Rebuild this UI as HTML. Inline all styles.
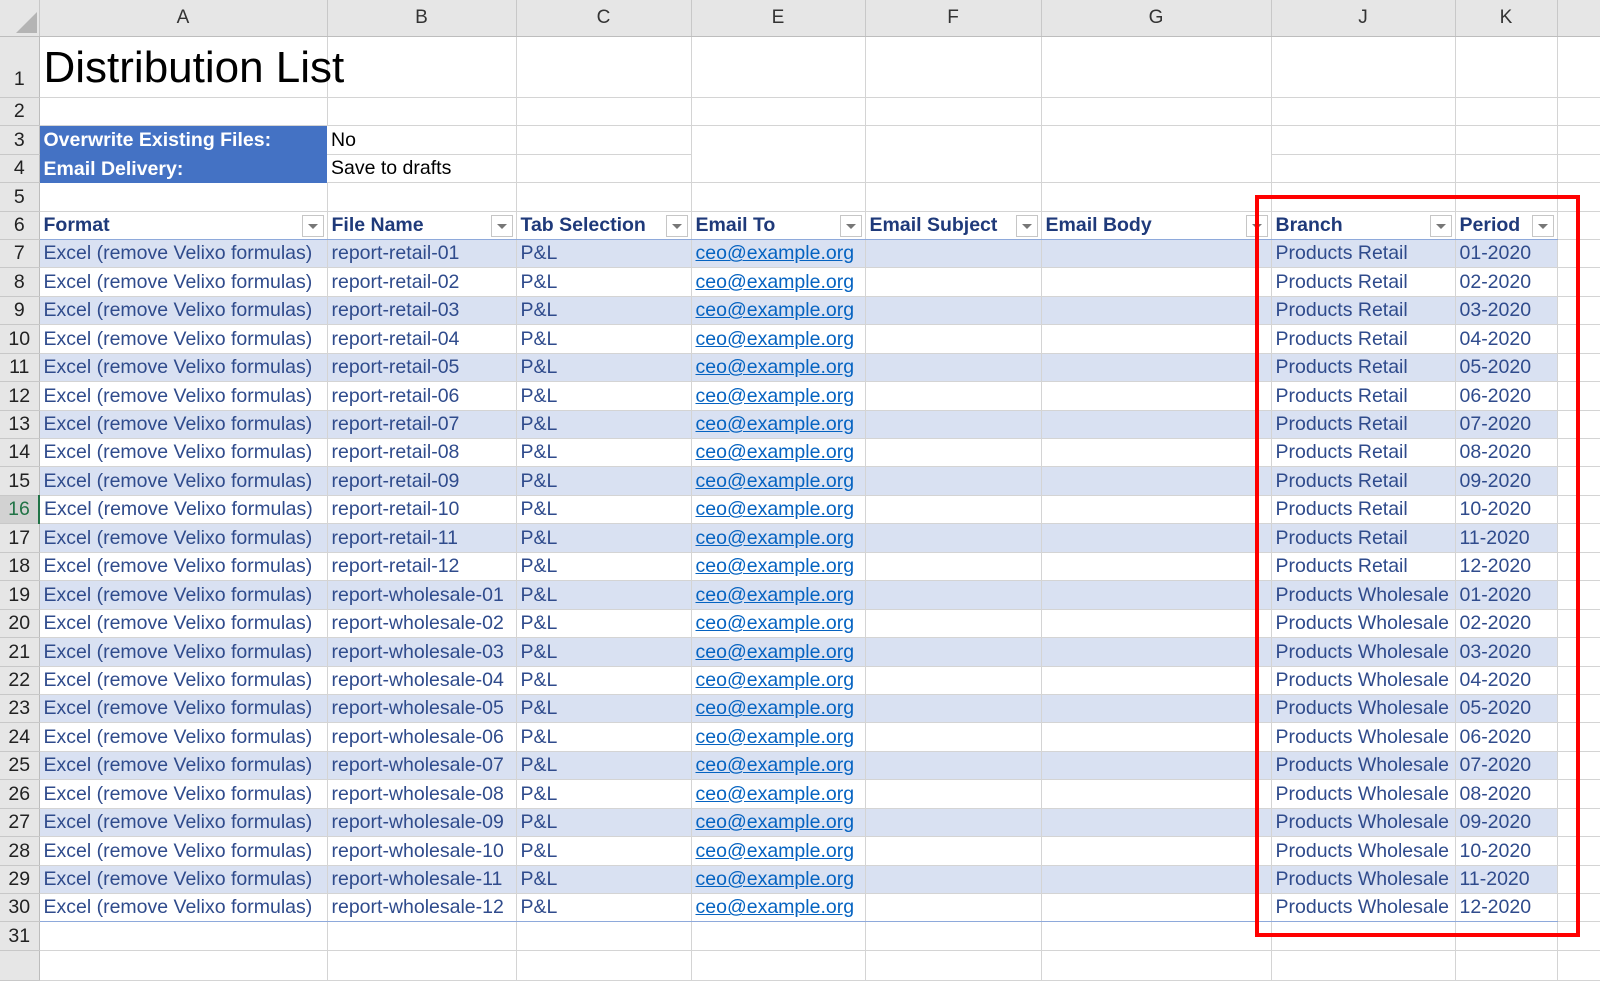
<!DOCTYPE html>
<html><head><meta charset="utf-8">
<style>
*{margin:0;padding:0;box-sizing:border-box}
body{width:1600px;height:951px;overflow:hidden;background:#fff;font-family:"Liberation Sans",sans-serif;position:relative}
table{border-collapse:collapse;table-layout:fixed;position:absolute;left:0;top:0;width:1600px}
tr{height:28.44px}
td{border-right:1px solid #d4d4d4;border-bottom:1px solid #d4d4d4;font-size:19.5px;color:#2f4b8c;padding:0 0 0 4px;white-space:nowrap;overflow:hidden;vertical-align:bottom;padding-bottom:2px;position:relative}
tr.h td{background:#e6e6e6;color:#333;text-align:center;vertical-align:middle;padding:0;border-right:1px solid #c8c8c8;border-bottom:1px solid #bdbdbd;font-size:19px}
td.n{background:#e6e6e6;color:#222;text-align:center;padding:0 0 2px 0;border-right:1px solid #bdbdbd;border-bottom:1px solid #c8c8c8;font-size:19.5px}
td.n16{background:#d2d2d2;color:#217346;border-right:2px solid #217346}
tr.b td:not(.n){background:#d9e1f2}
.bl{background:#4472c4!important;color:#fff!important;font-weight:bold;border-right:none!important;border-bottom:none!important}
.k{color:#000}
.hd td:not(.n){font-weight:bold;color:#1f3a7a;border-top:1px solid #8ea9db;border-bottom:1px solid #8ea9db}
.f{position:absolute;right:3px;top:3px;width:22px;height:22px;border:1px solid #c6c6c6;background:#fff}
.f:after{content:"";position:absolute;left:5px;top:8px;border-left:5px solid transparent;border-right:5px solid transparent;border-top:5px solid #777}
a{color:#0563c1;text-decoration:underline}
.red{position:absolute;left:1255px;top:195px;width:325px;height:742px;border:4px solid #f00}
.tri{position:absolute;left:16px;top:12px;width:0;height:0;border-left:21px solid transparent;border-bottom:21px solid #b4b4b4}
</style></head><body>
<table>
<colgroup><col style="width:39px"><col style="width:288px"><col style="width:189px"><col style="width:175px"><col style="width:174px"><col style="width:176px"><col style="width:230px"><col style="width:184px"><col style="width:102px"><col style="width:43px"></colgroup>
<tr class="h" style="height:36.5px"><td></td><td>A</td><td>B</td><td>C</td><td>E</td><td>F</td><td>G</td><td>J</td><td>K</td><td></td></tr>
<tr style="height:60.8px"><td class="n" style="vertical-align:bottom;padding-bottom:6px">1</td><td style="font-size:44px;color:#000;padding-bottom:4px;overflow:visible">Distribution List</td><td></td><td></td><td></td><td></td><td></td><td></td><td></td><td></td></tr>
<tr><td class="n">2</td><td></td><td></td><td></td><td></td><td></td><td></td><td></td><td></td><td></td></tr>
<tr><td class="n">3</td><td class="bl">Overwrite Existing Files:</td><td class="k">No</td><td></td><td style="border-bottom:none"></td><td style="border-bottom:none"></td><td style="border-bottom:none"></td><td></td><td></td><td></td></tr>
<tr><td class="n">4</td><td class="bl">Email Delivery:</td><td class="k">Save to drafts</td><td></td><td></td><td></td><td></td><td></td><td></td><td></td></tr>
<tr><td class="n">5</td><td></td><td></td><td></td><td></td><td></td><td></td><td></td><td></td><td></td></tr>
<tr class="hd"><td class="n">6</td><td>Format<span class="f"></span></td><td>File Name<span class="f"></span></td><td>Tab Selection<span class="f"></span></td><td>Email To<span class="f"></span></td><td>Email Subject<span class="f"></span></td><td>Email Body<span class="f"></span></td><td>Branch<span class="f"></span></td><td>Period<span class="f"></span></td><td style="border-top:none;border-bottom:1px solid #d4d4d4"></td></tr>
<tr class="b"><td class="n">7</td><td>Excel (remove Velixo formulas)</td><td>report-retail-01</td><td>P&amp;L</td><td><a>ceo@example.org</a></td><td></td><td></td><td>Products Retail</td><td>01-2020</td><td style="background:#fff!important"></td></tr>
<tr><td class="n">8</td><td>Excel (remove Velixo formulas)</td><td>report-retail-02</td><td>P&amp;L</td><td><a>ceo@example.org</a></td><td></td><td></td><td>Products Retail</td><td>02-2020</td><td></td></tr>
<tr class="b"><td class="n">9</td><td>Excel (remove Velixo formulas)</td><td>report-retail-03</td><td>P&amp;L</td><td><a>ceo@example.org</a></td><td></td><td></td><td>Products Retail</td><td>03-2020</td><td style="background:#fff!important"></td></tr>
<tr><td class="n">10</td><td>Excel (remove Velixo formulas)</td><td>report-retail-04</td><td>P&amp;L</td><td><a>ceo@example.org</a></td><td></td><td></td><td>Products Retail</td><td>04-2020</td><td></td></tr>
<tr class="b"><td class="n">11</td><td>Excel (remove Velixo formulas)</td><td>report-retail-05</td><td>P&amp;L</td><td><a>ceo@example.org</a></td><td></td><td></td><td>Products Retail</td><td>05-2020</td><td style="background:#fff!important"></td></tr>
<tr><td class="n">12</td><td>Excel (remove Velixo formulas)</td><td>report-retail-06</td><td>P&amp;L</td><td><a>ceo@example.org</a></td><td></td><td></td><td>Products Retail</td><td>06-2020</td><td></td></tr>
<tr class="b"><td class="n">13</td><td>Excel (remove Velixo formulas)</td><td>report-retail-07</td><td>P&amp;L</td><td><a>ceo@example.org</a></td><td></td><td></td><td>Products Retail</td><td>07-2020</td><td style="background:#fff!important"></td></tr>
<tr><td class="n">14</td><td>Excel (remove Velixo formulas)</td><td>report-retail-08</td><td>P&amp;L</td><td><a>ceo@example.org</a></td><td></td><td></td><td>Products Retail</td><td>08-2020</td><td></td></tr>
<tr class="b"><td class="n">15</td><td>Excel (remove Velixo formulas)</td><td>report-retail-09</td><td>P&amp;L</td><td><a>ceo@example.org</a></td><td></td><td></td><td>Products Retail</td><td>09-2020</td><td style="background:#fff!important"></td></tr>
<tr><td class="n n16">16</td><td>Excel (remove Velixo formulas)</td><td>report-retail-10</td><td>P&amp;L</td><td><a>ceo@example.org</a></td><td></td><td></td><td>Products Retail</td><td>10-2020</td><td></td></tr>
<tr class="b"><td class="n">17</td><td>Excel (remove Velixo formulas)</td><td>report-retail-11</td><td>P&amp;L</td><td><a>ceo@example.org</a></td><td></td><td></td><td>Products Retail</td><td>11-2020</td><td style="background:#fff!important"></td></tr>
<tr><td class="n">18</td><td>Excel (remove Velixo formulas)</td><td>report-retail-12</td><td>P&amp;L</td><td><a>ceo@example.org</a></td><td></td><td></td><td>Products Retail</td><td>12-2020</td><td></td></tr>
<tr class="b"><td class="n">19</td><td>Excel (remove Velixo formulas)</td><td>report-wholesale-01</td><td>P&amp;L</td><td><a>ceo@example.org</a></td><td></td><td></td><td>Products Wholesale</td><td>01-2020</td><td style="background:#fff!important"></td></tr>
<tr><td class="n">20</td><td>Excel (remove Velixo formulas)</td><td>report-wholesale-02</td><td>P&amp;L</td><td><a>ceo@example.org</a></td><td></td><td></td><td>Products Wholesale</td><td>02-2020</td><td></td></tr>
<tr class="b"><td class="n">21</td><td>Excel (remove Velixo formulas)</td><td>report-wholesale-03</td><td>P&amp;L</td><td><a>ceo@example.org</a></td><td></td><td></td><td>Products Wholesale</td><td>03-2020</td><td style="background:#fff!important"></td></tr>
<tr><td class="n">22</td><td>Excel (remove Velixo formulas)</td><td>report-wholesale-04</td><td>P&amp;L</td><td><a>ceo@example.org</a></td><td></td><td></td><td>Products Wholesale</td><td>04-2020</td><td></td></tr>
<tr class="b"><td class="n">23</td><td>Excel (remove Velixo formulas)</td><td>report-wholesale-05</td><td>P&amp;L</td><td><a>ceo@example.org</a></td><td></td><td></td><td>Products Wholesale</td><td>05-2020</td><td style="background:#fff!important"></td></tr>
<tr><td class="n">24</td><td>Excel (remove Velixo formulas)</td><td>report-wholesale-06</td><td>P&amp;L</td><td><a>ceo@example.org</a></td><td></td><td></td><td>Products Wholesale</td><td>06-2020</td><td></td></tr>
<tr class="b"><td class="n">25</td><td>Excel (remove Velixo formulas)</td><td>report-wholesale-07</td><td>P&amp;L</td><td><a>ceo@example.org</a></td><td></td><td></td><td>Products Wholesale</td><td>07-2020</td><td style="background:#fff!important"></td></tr>
<tr><td class="n">26</td><td>Excel (remove Velixo formulas)</td><td>report-wholesale-08</td><td>P&amp;L</td><td><a>ceo@example.org</a></td><td></td><td></td><td>Products Wholesale</td><td>08-2020</td><td></td></tr>
<tr class="b"><td class="n">27</td><td>Excel (remove Velixo formulas)</td><td>report-wholesale-09</td><td>P&amp;L</td><td><a>ceo@example.org</a></td><td></td><td></td><td>Products Wholesale</td><td>09-2020</td><td style="background:#fff!important"></td></tr>
<tr><td class="n">28</td><td>Excel (remove Velixo formulas)</td><td>report-wholesale-10</td><td>P&amp;L</td><td><a>ceo@example.org</a></td><td></td><td></td><td>Products Wholesale</td><td>10-2020</td><td></td></tr>
<tr class="b"><td class="n">29</td><td>Excel (remove Velixo formulas)</td><td>report-wholesale-11</td><td>P&amp;L</td><td><a>ceo@example.org</a></td><td></td><td></td><td>Products Wholesale</td><td>11-2020</td><td style="background:#fff!important"></td></tr>
<tr><td class="n">30</td><td style="border-bottom:1px solid #8ea9db">Excel (remove Velixo formulas)</td><td style="border-bottom:1px solid #8ea9db">report-wholesale-12</td><td style="border-bottom:1px solid #8ea9db">P&amp;L</td><td style="border-bottom:1px solid #8ea9db"><a>ceo@example.org</a></td><td style="border-bottom:1px solid #8ea9db"></td><td style="border-bottom:1px solid #8ea9db"></td><td style="border-bottom:1px solid #8ea9db">Products Wholesale</td><td style="border-bottom:1px solid #8ea9db">12-2020</td><td></td></tr>
<tr><td class="n">31</td><td></td><td></td><td></td><td></td><td></td><td></td><td></td><td></td><td></td></tr>
<tr style="height:30px"><td class="n"></td><td></td><td></td><td></td><td></td><td></td><td></td><td></td><td></td><td></td></tr>
</table>
<div class="tri"></div>
<div class="red"></div>
</body></html>
